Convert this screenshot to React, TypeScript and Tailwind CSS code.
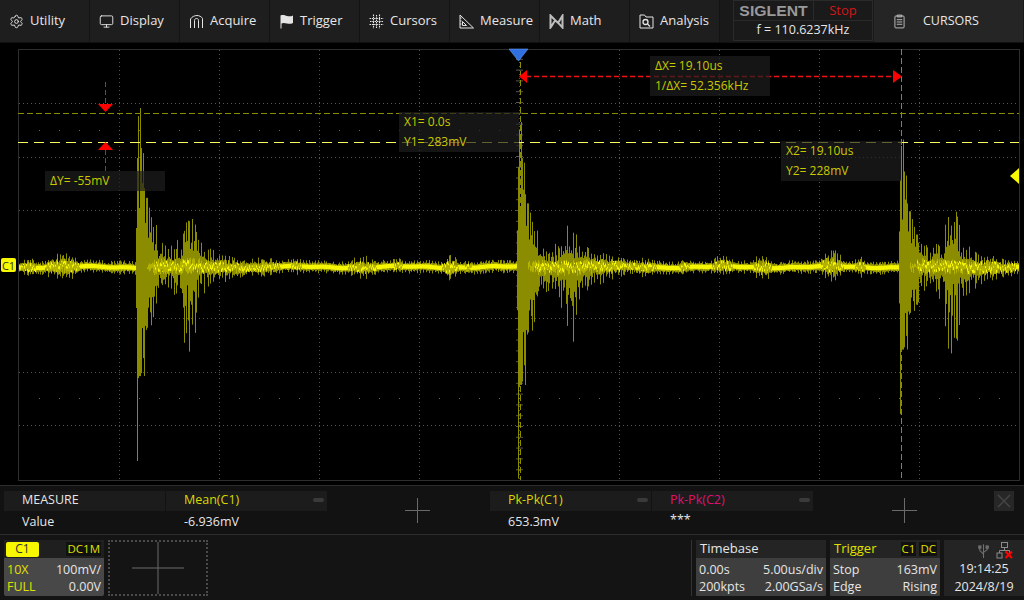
import { Monitor, Settings } from "lucide-react";

// seeded so every render draws the same trace
function rng(seed: number) {
  let a = seed;
  return () => {
    a |= 0;
    a = (a + 0x6d2b79f5) | 0;
    let t = Math.imul(a ^ (a >>> 15), 1 | a);
    t = (t + Math.imul(t ^ (t >>> 7), 61 | t)) ^ t;
    return ((t ^ (t >>> 14)) >>> 0) / 4294967296;
  };
}

const BASE_Y = 267;
const BURSTS = [
  { x: 137, top: 1, bottom: 1, second: 1 },
  { x: 518, top: 0.9, bottom: 1.1, second: 0.85 },
  { x: 900, top: 0.8, bottom: 0.76, second: 1.05 },
];
// first columns of a burst, measured off the trace, dx = -1..16
const SPIKE_UP = [40, 110, 152, 60, 160, 120, 85, 115, 80, 45, 70, 70, 30, 60, 35, 50, 25, 40];
const SPIKE_DOWN = [40, 193, 110, 108, 108, 105, 60, 90, 108, 58, 62, 60, 40, 30, 45, 58, 30, 50];
// small noisy humps between the bursts: [centre x, half width, amplitude]
const BUMPS = [
  [62, 22, 14], [28, 12, 8], [262, 30, 8], [296, 10, 7], [362, 20, 10], [398, 12, 6], [450, 12, 11], [468, 8, 6],
  [684, 10, 7], [722, 16, 9], [762, 12, 12], [832, 14, 15], [860, 8, 9], [645, 18, 8],
];

function envelope(x: number) {
  let up = 5;
  let down = 5;
  for (const b of BURSTS) {
    const dx = x - b.x;
    if (dx <= 16 || dx > 170) continue;
    const g = Math.exp(-Math.pow((dx - 52) / 11, 2)) * b.second;
    const tail = Math.exp(-Math.abs(dx - 50) / 34);
    const decay = Math.exp(-(dx - 16) / 14);
    up = Math.max(up, 50 * decay * b.top, 58 * g, 34 * tail);
    down = Math.max(down, 60 * decay * b.bottom, 92 * g, 42 * tail);
  }
  for (const [c, w, a] of BUMPS) {
    const k = Math.abs(x - c) / w;
    if (k < 1) {
      up = Math.max(up, a * (1 - k * k));
      down = Math.max(down, a * (1 - k * k));
    }
  }
  return { up, down };
}

function buildTrace() {
  const r = rng(41);
  let olive = "";
  let mid = "";
  let bright = "";
  for (let x = 19; x < 1019; x++) {
    const wob = Math.sin(x / 17) * 0.8 + Math.sin(x / 5.300) * 0.400;
    const y0 = BASE_Y + wob;
    const burst = BURSTS.find((b) => x - b.x >= -1 && x - b.x <= 16);
    if (burst) {
      const i = x - burst.x + 1;
      const top = Math.max(SPIKE_UP[i] * burst.top, i <= 9 ? 36 : 12);
      const bottom = Math.max(SPIKE_DOWN[i] * burst.bottom, i <= 9 ? 36 : 12);
      olive += `M${x + 0.5} ${(y0 - top).toFixed(1)}V${(y0 + bottom).toFixed(1)}`;
      if (i > 10) {
        mid += `M${x + 0.5} ${(y0 - 6 * r()).toFixed(1)}V${(y0 + 6 * r()).toFixed(1)}`;
      }
      continue;
    }
    const { up, down } = envelope(x);
    // the ringing reads as thin upright spikes a few pixels apart
    const spike = x % 3 === 0 ? r() < 0.8 : r() < 0.15;
    const a = spike ? 0.6 + r() * 0.4 : 0.15 + r() * 0.35;
    const b = spike ? 0.5 + r() * 0.5 : 0.15 + r() * 0.35;
    olive += `M${x + 0.5} ${(y0 - 2 - up * a).toFixed(1)}V${(y0 + 2 + down * b).toFixed(1)}`;
    const m = Math.min(Math.max(up, down), 12);
    mid += `M${x + 0.5} ${(y0 - 1 - m * r() * 0.6).toFixed(1)}V${(y0 + 1 + m * r() * 0.6).toFixed(1)}`;
    const calm = up <= 5;
    const h = calm ? 2.1 : 0.4 + r() * 1.4;
    const off = calm ? 0 : (r() - 0.5) * Math.min(m, 10);
    bright += `M${x + 0.5} ${(y0 + off - h).toFixed(1)}V${(y0 + off + h).toFixed(1)}`;
  }
  return { olive, mid, bright };
}

const trace = buildTrace();

const MENU_ICON = "w-[15px] h-[15px] shrink-0 text-[#e4e4e4]";

function AcquireIcon() {
  return (
    <svg viewBox="0 0 15 15" className={MENU_ICON} fill="none" stroke="currentColor" strokeWidth="1">
      <path d="M1.500 14V5C3 2.500 6 1.500 8 1.500S12.500 2.500 13.500 4.500V14" />
      <path d="M5.500 14V6.500C5.500 5 6.500 4.500 7.500 4.500S9.500 5 9.500 6.500V14" />
    </svg>
  );
}

function FlagIcon() {
  return (
    <svg viewBox="0 0 15 15" className={MENU_ICON} fill="currentColor">
      <path d="M1.500 1.500C4 0.500 6 1.500 8 2S12 2.500 14 1.500V9C12 10 10 10 8 9.500S4 8.500 2.500 9.500V14.500H1.500Z" />
    </svg>
  );
}

function CursorsIcon() {
  return (
    <svg viewBox="0 0 15 15" className={MENU_ICON} fill="none" stroke="currentColor" strokeWidth="1.100" strokeDasharray="1.500 0.800">
      <path d="M4.500 0.500V14.500M10.500 0.500V14.500M0.500 4.500H14.500M0.500 10.500H14.500M7.500 1V14M1 7.500H14" />
    </svg>
  );
}

function MeasureIcon() {
  return (
    <svg viewBox="0 0 15 15" className={MENU_ICON} fill="none" stroke="currentColor" strokeWidth="1">
      <path d="M1 1V14H14.500Z" />
      <path d="M3.500 7.500V11.500H7.500Z" />
      <path d="M1 4H2.500M1 7H2.500M1 10H2.500" />
    </svg>
  );
}

function MathIcon() {
  return (
    <svg viewBox="0 0 15 15" className={MENU_ICON} fill="none" stroke="#bdbdbd" strokeWidth="2">
      <path d="M1.500 1.500C5 5 5 5 7.500 7.500S11 5 13.500 1.500V13.500C10 9.500 10 9.500 7.500 7.500S5 9.500 1.500 13.500Z" />
    </svg>
  );
}

function AnalysisIcon() {
  return (
    <svg viewBox="0 0 15 15" className={MENU_ICON} fill="none" stroke="currentColor" strokeWidth="1">
      <path d="M1 5V14H14V3H7L5.500 1H1V5" />
      <circle cx="6.500" cy="8" r="2.500" strokeWidth="1.300" />
      <path d="M8.500 10L11 12.500" strokeWidth="1.300" />
    </svg>
  );
}

function ClipboardIcon() {
  return (
    <svg viewBox="0 0 12 16" className="w-[11px] h-[15px] shrink-0 text-[#c4c4c4]" fill="none" stroke="currentColor" strokeWidth="1">
      <rect x="1" y="2" width="10" height="13" rx="1" />
      <path d="M3.500 1H8.500V3H3.500ZM3 6H9M3 8.500H9M3 11H9" />
    </svg>
  );
}

const MENU = [
  { label: "Utility", icon: <Settings className={MENU_ICON} strokeWidth={1.5} /> },
  { label: "Display", icon: <Monitor className={MENU_ICON} strokeWidth={1.5} /> },
  { label: "Acquire", icon: <AcquireIcon /> },
  { label: "Trigger", icon: <FlagIcon /> },
  { label: "Cursors", icon: <CursorsIcon /> },
  { label: "Measure", icon: <MeasureIcon /> },
  { label: "Math", icon: <MathIcon /> },
  { label: "Analysis", icon: <AnalysisIcon /> },
];

function TopBar() {
  return (
    <div className="flex h-[43px] bg-[#191919] border-b border-[#111]">
      {MENU.map((m) => (
        <div key={m.label} className="w-[90px] shrink-0 h-[42px] flex items-center gap-[6px] pl-[9px] bg-[#1e1e1e] border-r border-[#141414] text-[13px] text-[#e6e6e6]">
          {m.icon}
          <span>{m.label}</span>
        </div>
      ))}
      <div className="ml-[13px] w-[140px] shrink-0 h-[41px] flex flex-col gap-px bg-[#2a2a2a] border border-[#2a2a2a]">
        <div className="flex h-[19px] gap-px">
          <div className="w-[79px] bg-[#1a1a1a] flex items-center justify-center overflow-hidden">
            <span className="text-[15px] leading-none font-bold text-[#999] [font-family:'Liberation_Sans',sans-serif] scale-x-105">SIGLENT</span>
          </div>
          <div className="flex-1 bg-[#1a1a1a] flex items-center justify-center text-[13px] leading-none text-[#d01818]">Stop</div>
        </div>
        <div className="flex-1 bg-[#1a1a1a] flex items-center justify-center text-[12.5px] leading-none text-[#e6e6e6]">f = 110.6237kHz</div>
      </div>
      <div className="ml-[1px] w-[149px] shrink-0 h-[42px] flex items-center bg-[#252525] pl-[20px] text-[12.5px] text-[#e6e6e6]">
        <ClipboardIcon />
        <span className="ml-[18px]">CURSORS</span>
      </div>
    </div>
  );
}

function Grid() {
  const vs = [119, 219, 319, 419, 519, 619, 719, 819, 919];
  const hs = [103, 157, 210, 264, 318, 372, 425];
  const dots: number[] = [];
  for (let x = 39; x < 1019; x += 20) dots.push(x);
  const ticks: number[] = [];
  for (let i = -19; i <= 19; i++) ticks.push(264.5 + i * 10.8);
  return (
    <g>
      <rect x="18.500" y="49.500" width="1001" height="431" fill="none" stroke="#2e2e2e" />
      {vs.map((x) => (
        <path key={x} d={`M${x + 0.5} 50V480`} stroke="#555" strokeDasharray="1 3" />
      ))}
      {hs.map((y) => (
        <path key={y} d={`M19 ${y + 0.5}H1019`} stroke="#555" strokeDasharray="1 3" />
      ))}
      {dots.map((x) => (
        <g key={x}>
          <rect x={x} y="130" width="1" height="1" fill="#666" />
          <rect x={x} y="398" width="1" height="1" fill="#666" />
        </g>
      ))}
      {ticks.map((y) => (
        <path key={y} d={`M516 ${y}H523`} stroke="#555" />
      ))}
    </g>
  );
}

function Readout({ className, lines }: { className: string; lines: string[] }) {
  return (
    <div className={`absolute bg-[#1e1e1e]/70 px-[5px] flex flex-col justify-around text-[12px] leading-none text-[#c9c900] ${className}`}>
      {lines.map((l) => (
        <span key={l}>{l}</span>
      ))}
    </div>
  );
}

function Plot() {
  return (
    <div className="relative h-[442px] bg-black">
      <svg viewBox="0 43 1024 442" className="block w-[1024px] h-[442px]">
        <Grid />
        <path d={trace.olive} stroke="#8c8c00" strokeWidth="1" fill="none" />
        <path d={trace.mid} stroke="#b4b400" strokeWidth="1" fill="none" />
        <path d={trace.bright} stroke="#f6f600" strokeWidth="1" fill="none" />
        {/* cursors */}
        <path d="M18 113.500H1019" stroke="#8c8c00" strokeDasharray="6 3" />
        <path d="M18 142.500H1019" stroke="#fbfb60" strokeDasharray="10 6" />
        <path d="M520.500 62V480" stroke="#8c8c00" strokeDasharray="6 3" />
        <path d="M901.500 49V480" stroke="#8c8c00" strokeDasharray="6 3" />
        {/* delta arrows */}
        <path d="M526 76.500H895" stroke="#f01010" strokeWidth="1.300" strokeDasharray="5 3" />
        <path d="M519 76.500L527 70V83Z" fill="#ff0000" />
        <path d="M902 76.500L893 70V83Z" fill="#ff0000" />
        <path d="M105.500 82V104M105.500 150V172" stroke="#f01010" strokeWidth="1" strokeDasharray="5 3" />
        <path d="M98 104H113L105.500 112Z" fill="#ff0000" />
        <path d="M98 150H113L105.500 142Z" fill="#ff0000" />
        {/* markers */}
        <path d="M509 49H528L518.500 61Z" fill="#2f6fe0" stroke="#6a9cf0" strokeWidth="0.600" />
        <path d="M1019 168V184L1010 176Z" fill="#f8f800" />
      </svg>
      <Readout className="left-[650px] top-[13px] w-[120px] h-[40px]" lines={["ΔX= 19.10us", "1/ΔX= 52.356kHz"]} />
      <Readout className="left-[399px] top-[69px] w-[120px] h-[40px]" lines={["X1= 0.0s", "Y1= 283mV"]} />
      <Readout className="left-[781px] top-[98px] w-[120px] h-[40px]" lines={["X2= 19.10us", "Y2= 228mV"]} />
      <Readout className="left-[45px] top-[128px] w-[120px] h-[20px]" lines={["ΔY= -55mV"]} />
      <div className="absolute left-[1px] top-[215px] w-[15px] h-[14px] rounded-[2px] bg-[#f8f800] flex items-center justify-center text-[11px] leading-none text-[#333]">
        C1
      </div>
    </div>
  );
}

function Plus({ size }: { size: number }) {
  return (
    <svg width={size} height={size} viewBox="0 0 50 50" stroke="#6a6a6a" strokeWidth={50 / size}>
      <path d="M0 25H50M25 0V50" />
    </svg>
  );
}

function MeasureHead({ label, color }: { label: string; color: string }) {
  return (
    <div className={`relative w-[161px] h-[20px] bg-[#1c1c1c] flex items-center pl-[18px] text-[12.5px] ${color}`}>
      {label}
      <span className="absolute right-[3px] top-[7px] w-[11px] h-[4px] rounded-full bg-[#3a3a3a]" />
    </div>
  );
}

function MeasurePanel() {
  const col = "flex flex-col";
  const val = "h-[24px] pl-[18px] flex items-center text-[12.500px] text-[#e6e6e6]";
  return (
    <div className="h-[50px] flex pl-[4px] pt-[5px] bg-[#121212] border-y border-[#2c2c2c]">
      <div className={`${col} w-[162px]`}>
        <div className="w-[161px] h-[20px] bg-[#1c1c1c] flex items-center pl-[18px] text-[12.500px] text-[#e6e6e6]">MEASURE</div>
        <div className={val}>Value</div>
      </div>
      <div className={`${col} w-[162px]`}>
        <MeasureHead label="Mean(C1)" color="text-[#d8d800]" />
        <div className={val}>-6.936mV</div>
      </div>
      <div className="w-[162px] flex items-center justify-center pb-[4px] pl-[16px]">
        <Plus size={25} />
      </div>
      <div className={`${col} w-[162px]`}>
        <MeasureHead label="Pk-Pk(C1)" color="text-[#d8d800]" />
        <div className={val}>653.3mV</div>
      </div>
      <div className={`${col} w-[162px]`}>
        <MeasureHead label="Pk-Pk(C2)" color="text-[#e0106a]" />
        <div className={`${val} pb-[4px]`}>***</div>
      </div>
      <div className="w-[180px] flex items-center justify-center pb-[4px]">
        <Plus size={25} />
      </div>
      <div className="w-[20px] h-[20px] bg-[#272727] flex items-center justify-center">
        <svg viewBox="0 0 20 20" className="w-[20px] h-[20px]" stroke="#454545" strokeWidth="1.500">
          <path d="M4 4L16 16M16 4L4 16" />
        </svg>
      </div>
    </div>
  );
}

function Row({ left, right, leftColor = "text-[#e6e6e6]" }: { left: string; right: string; leftColor?: string }) {
  return (
    <div className="flex justify-between h-[17px] items-center">
      <span className={leftColor}>{left}</span>
      <span>{right}</span>
    </div>
  );
}

function StatusBar() {
  return (
    <div className="flex h-[65px] bg-[#141414] pl-[4px] pt-[5px] text-[12.500px] text-[#e6e6e6]">
      <div className="w-[100px] h-[56px] rounded-[2px] overflow-hidden flex flex-col bg-[#484848]">
        <div className="h-[18px] flex items-center justify-between bg-[#1f1f1f] pl-[2px] pr-[3px]">
          <span className="w-[33px] h-[15px] rounded-[2px] bg-[#f8f800] flex items-center justify-center text-[12px] leading-none text-[#333]">C1</span>
          <span className="bg-[#111] px-px text-[11.500px] leading-[14px] text-[#e0e000]">DC1M</span>
        </div>
        <div className="flex-1 px-[3px] pt-[4px]">
          <Row left="10X" right="100mV/" leftColor="text-[#e0e000]" />
          <Row left="FULL" right="0.00V" leftColor="text-[#e0e000]" />
        </div>
      </div>
      <div className="ml-[4px] w-[100px] h-[56px] border-2 border-dotted border-[#4a4a4a] flex items-center justify-center">
        <Plus size={52} />
      </div>
      <div className="ml-[483px] w-px h-[56px] bg-[#333]" />
      <div className="ml-[4px] w-[130px] h-[56px] flex flex-col bg-[#3e3e3e] rounded-[1px] overflow-hidden">
        <div className="h-[18px] flex items-center bg-[#242424] pl-[4px] text-[13px]">Timebase</div>
        <div className="flex-1 px-[3px] pt-[4px] text-[12.500px]">
          <Row left="0.00s" right="5.00us/div" />
          <Row left="200kpts" right="2.00GSa/s" />
        </div>
      </div>
      <div className="ml-[4px] w-[110px] h-[56px] flex flex-col bg-[#3e3e3e] rounded-[1px] overflow-hidden">
        <div className="h-[18px] flex items-center justify-between bg-[#242424] pl-[4px] pr-[3px] text-[13px] text-[#e0e000]">
          <span>Trigger</span>
          <span className="flex gap-[3px] text-[11.500px] leading-[14px]">
            <span className="bg-[#111] px-px">C1</span>
            <span className="bg-[#111] px-px">DC</span>
          </span>
        </div>
        <div className="flex-1 px-[3px] pt-[4px]">
          <Row left="Stop" right="163mV" />
          <Row left="Edge" right="Rising" />
        </div>
      </div>
      <div className="ml-[4px] w-[80px] h-[56px] flex flex-col items-center bg-[#242424]">
        <div className="h-[21px] w-full shrink-0 flex items-center justify-end gap-[7px] pr-[11px] text-[#6e6e6e]">
          <svg viewBox="0 0 12 17" className="w-[11px] h-[16px]" fill="none" stroke="currentColor" strokeWidth="1.200">
            <path d="M6 1V16M6 12L2 8V5M6 10L10 7V5" />
            <rect x="0.800" y="3" width="2.400" height="2.400" fill="currentColor" />
            <rect x="8.800" y="3" width="2.400" height="2.400" fill="currentColor" />
          </svg>
          <svg viewBox="0 0 17 17" className="w-[17px] h-[17px]" fill="none" strokeWidth="1">
            <g stroke="#8a8a8a">
              <rect x="5.500" y="0.500" width="6" height="5" />
              <rect x="1" y="11" width="5" height="5" />
              <path d="M8.500 5.500V8.500M3.500 11V8.500H13.500V11" />
            </g>
            <path d="M9.500 9.500L16 16M16 9.500L9.500 16" stroke="#ff0000" strokeWidth="2.200" />
          </svg>
        </div>
        <div className="h-[17px] flex items-center">19:14:25</div>
        <div className="h-[18px] flex items-center">2024/8/19</div>
      </div>
    </div>
  );
}

export default function App() {
  return (
    <div className="w-[1024px] h-[600px] overflow-hidden bg-black [font-family:'Open_Sans',sans-serif]">
      <TopBar />
      <Plot />
      <MeasurePanel />
      <StatusBar />
    </div>
  );
}
